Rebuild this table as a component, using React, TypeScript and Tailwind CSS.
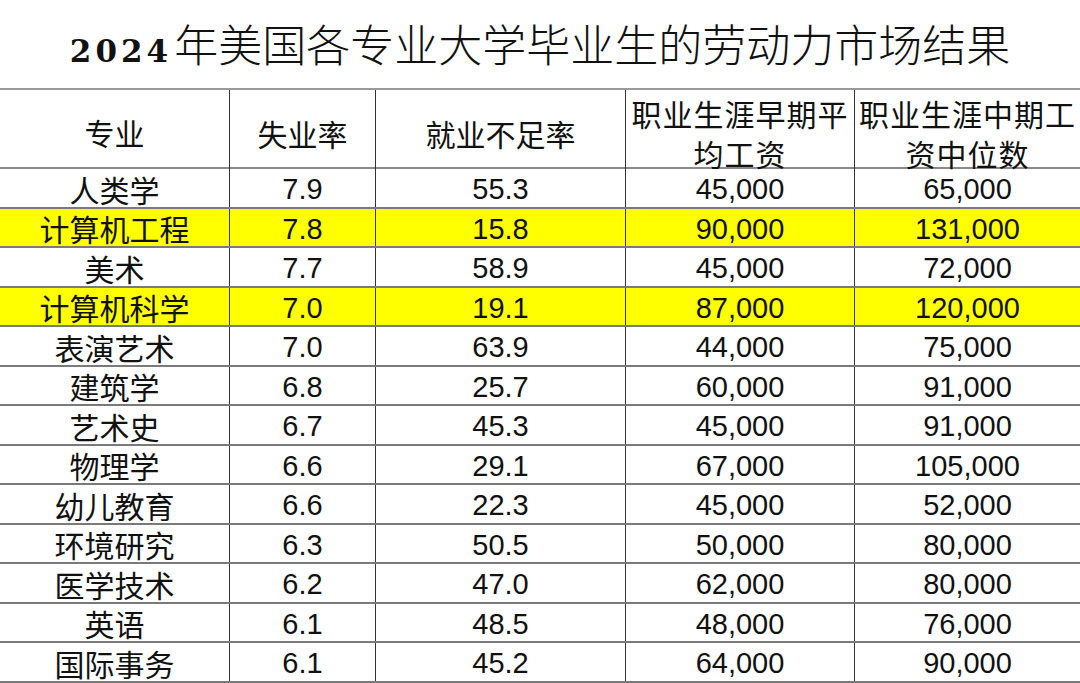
import React from "react";

// 数据：专业、失业率、就业不足率、早期平均工资、中期工资中位数
const rows = [
  { major: "人类学", unemp: "7.9", under: "55.3", early: "45,000", mid: "65,000" },
  { major: "计算机工程", unemp: "7.8", under: "15.8", early: "90,000", mid: "131,000", hl: true },
  { major: "美术", unemp: "7.7", under: "58.9", early: "45,000", mid: "72,000" },
  { major: "计算机科学", unemp: "7.0", under: "19.1", early: "87,000", mid: "120,000", hl: true },
  { major: "表演艺术", unemp: "7.0", under: "63.9", early: "44,000", mid: "75,000" },
  { major: "建筑学", unemp: "6.8", under: "25.7", early: "60,000", mid: "91,000" },
  { major: "艺术史", unemp: "6.7", under: "45.3", early: "45,000", mid: "91,000" },
  { major: "物理学", unemp: "6.6", under: "29.1", early: "67,000", mid: "105,000" },
  { major: "幼儿教育", unemp: "6.6", under: "22.3", early: "45,000", mid: "52,000" },
  { major: "环境研究", unemp: "6.3", under: "50.5", early: "50,000", mid: "80,000" },
  { major: "医学技术", unemp: "6.2", under: "47.0", early: "62,000", mid: "80,000" },
  { major: "英语", unemp: "6.1", under: "48.5", early: "48,000", mid: "76,000" },
  { major: "国际事务", unemp: "6.1", under: "45.2", early: "64,000", mid: "90,000" },
];

const cols = "grid grid-cols-[229px_146px_250px_229px_1fr]";
const cell = "flex items-center justify-center border-l border-[#333] pt-[3px]";

const App = () => {
  return (
    <div className="w-[1080px] h-[683px] overflow-hidden bg-white text-[#111] font-['Liberation_Sans','Noto_Sans_CJK_SC',sans-serif]">
      <div className="h-[88px] flex items-center justify-center">
        <div className="flex items-baseline leading-none">
          <span className="font-['DejaVu_Serif',serif] font-bold text-[31px] tracking-[4px] mr-[2px]">2024</span>
          <span className="text-[44px] font-light font-['Noto_Sans_CJK_SC',sans-serif]">年美国各专业大学毕业生的劳动力市场结果</span>
        </div>
      </div>

      <div className="border-t-2 border-[#999]">
        <div className={`${cols} h-[79px] border-b-2 border-[#8a8a8a] text-[30px] leading-[40px] font-['Noto_Sans_CJK_SC',sans-serif]`}>
          <div className="flex items-center justify-center">专业</div>
          <div className={cell}>失业率</div>
          <div className={cell}>就业不足率</div>
          <div className={`${cell} flex-col text-center tracking-[1px]`}>
            <span>职业生涯早期平</span>
            <span>均工资</span>
          </div>
          <div className={`${cell} flex-col text-center tracking-[1px]`}>
            <span>职业生涯中期工</span>
            <span>资中位数</span>
          </div>
        </div>

        {rows.map((r) => (
          <div
            key={r.major}
            className={`${cols} h-[39.5px] border-b-2 border-[#7a7a7a] text-[29px] leading-[30px] ${r.hl ? "bg-[#ffff00]" : "bg-white"}`}
          >
            <div className="flex items-center justify-center pt-[2px] text-[30px] font-['Noto_Sans_CJK_SC',sans-serif]">{r.major}</div>
            <div className={cell}>{r.unemp}</div>
            <div className={cell}>{r.under}</div>
            <div className={cell}>{r.early}</div>
            <div className={cell}>{r.mid}</div>
          </div>
        ))}
      </div>
    </div>
  );
};

export default App;
